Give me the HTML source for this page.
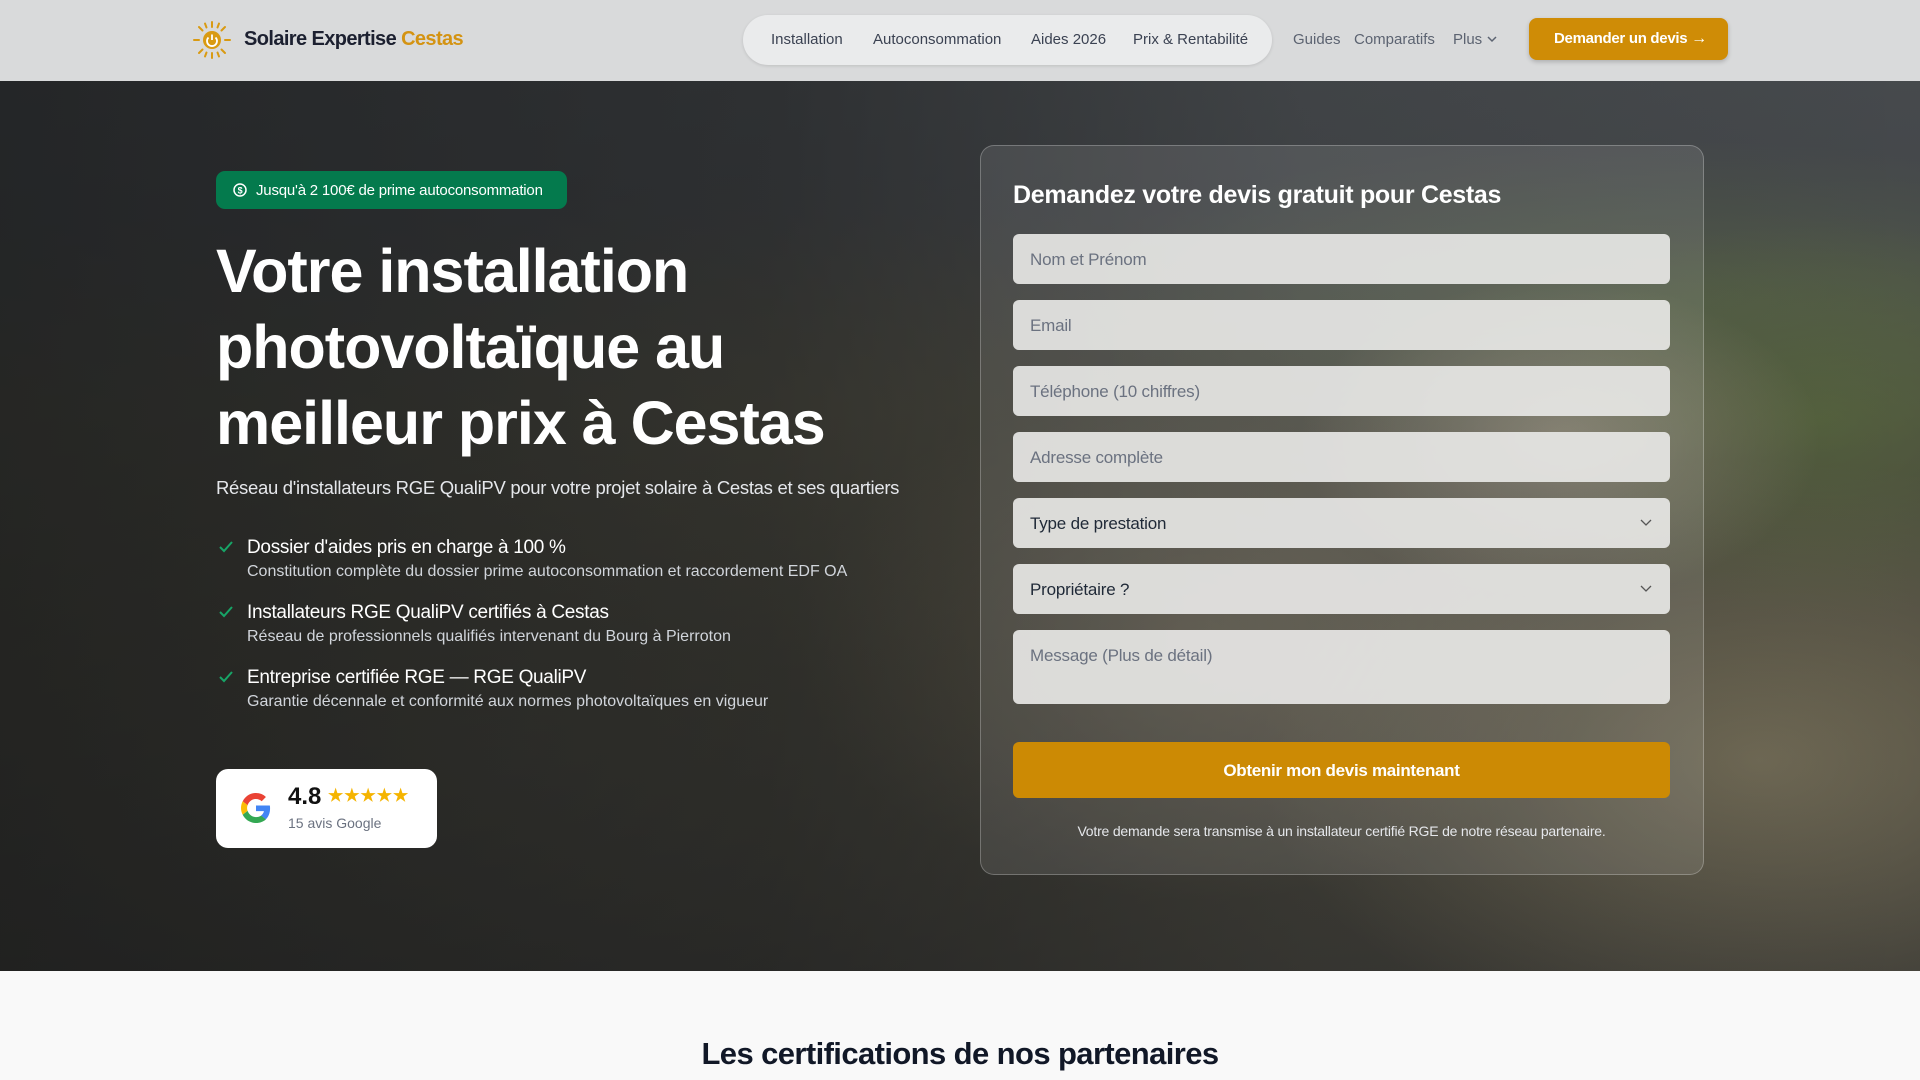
<!DOCTYPE html>
<html><head><meta charset="utf-8"><style>
*{box-sizing:border-box;margin:0;padding:0}
body{width:1920px;height:1080px;overflow:hidden;font-family:"Liberation Sans",sans-serif;background:#f9f9f9;position:relative}
.abs{position:absolute}
#hero{left:0;top:0;width:1920px;height:971px;overflow:hidden;
background:
radial-gradient(ellipse 260px 160px at 1560px 440px,rgba(170,160,140,.55),transparent),
radial-gradient(ellipse 300px 200px at 1820px 420px,rgba(90,110,60,.6),transparent),
radial-gradient(ellipse 500px 300px at 1760px 760px,rgba(150,140,110,.55),transparent),
radial-gradient(ellipse 400px 260px at 1200px 640px,rgba(120,110,90,.5),transparent),
radial-gradient(ellipse 600px 160px at 1650px 300px,rgba(95,110,75,.55),transparent),
radial-gradient(ellipse 500px 250px at 800px 420px,rgba(90,85,70,.4),transparent),
radial-gradient(ellipse 600px 300px at 500px 750px,rgba(80,80,70,.35),transparent),
linear-gradient(180deg,#474b4e 0%,#44474a 22%,#4a4a40 42%,#444238 70%,#3a3934 100%)}
#hero:before{content:"";position:absolute;inset:0;background:linear-gradient(90deg,rgba(22,23,24,.7) 0%,rgba(22,23,24,.5) 40%,rgba(22,23,24,.12) 68%,rgba(22,23,24,0) 100%)}
#hdr{left:0;top:0;width:1920px;height:81px;background:#d9dadb;z-index:5}
.nav{font-size:15px;color:#3b4252;top:31px}
.pill{left:743px;top:15px;width:529px;height:50px;border-radius:25px;background:#eaebec;box-shadow:0 1px 3px rgba(0,0,0,.12)}
.inp{left:1013px;width:657px;height:50px;border-radius:6px;background:rgba(230,230,228,.93);font-size:17px;color:#6b7280;padding:16px 17px 0;letter-spacing:-.2px}
.t{color:#fff}
</style></head><body>
<div id="hero" class="abs"></div>
<div id="hdr" class="abs">
<svg class="abs" style="left:193px;top:21px" width="38" height="38" viewBox="0 0 38 38"><g stroke="#d99a12" stroke-width="2" stroke-linecap="round"><line x1="19" y1="1" x2="19" y2="6"/><line x1="19" y1="32" x2="19" y2="37"/><line x1="1" y1="19" x2="6" y2="19"/><line x1="32" y1="19" x2="37" y2="19"/><line x1="6" y1="6" x2="9.5" y2="9.5"/><line x1="28.5" y1="28.5" x2="32" y2="32"/><line x1="6" y1="32" x2="9.5" y2="28.5"/><line x1="28.5" y1="9.5" x2="32" y2="6"/><line x1="12" y1="2.5" x2="13.5" y2="6.5"/><line x1="26" y1="2.5" x2="24.5" y2="6.5"/><line x1="12" y1="35.5" x2="13.5" y2="31.5"/><line x1="26" y1="35.5" x2="24.5" y2="31.5"/></g><circle cx="19" cy="19" r="9" fill="#d99a12"/><path d="M15.5 16.5a5 5 0 1 0 7 0" stroke="#fff" stroke-width="1.8" fill="none"/><line x1="19" y1="13.5" x2="19" y2="19" stroke="#fff" stroke-width="1.8"/></svg>
<div class="abs" style="left:244px;top:28px;font-size:20px;font-weight:bold;color:#1c2030;letter-spacing:-.6px">Solaire Expertise <span style="color:#d49312">Cestas</span></div>
<div class="abs pill"></div>
<div class="abs nav" style="left:771px">Installation</div>
<div class="abs nav" style="left:873px">Autoconsommation</div>
<div class="abs nav" style="left:1031px">Aides 2026</div>
<div class="abs nav" style="left:1133px">Prix &amp; Rentabilité</div>
<div class="abs nav" style="left:1293px;color:#5c6371">Guides</div>
<div class="abs nav" style="left:1354px;color:#5c6371">Comparatifs</div>
<div class="abs nav" style="left:1453px;color:#5c6371">Plus <svg width="12" height="10" viewBox="0 0 12 10"><path d="M2 3l4 4 4-4" stroke="#5c6371" stroke-width="1.5" fill="none"/></svg></div>
<div class="abs" style="left:1529px;top:18px;width:199px;height:42px;border-radius:8px;background:#cf8c06;color:#fff;font-size:15px;font-weight:bold;padding-top:12px;padding-left:25px;box-shadow:0 2px 5px rgba(0,0,0,.2);letter-spacing:-.3px">Demander un devis <span style="font-size:16px">→</span></div>
</div>

<div class="abs" style="left:216px;top:171px;width:351px;height:38px;border-radius:9px;background:#047a4d;color:#fff;font-size:15px;padding:11px 0 0 40px;letter-spacing:-.2px"><svg class="abs" style="left:17px;top:12px" width="14" height="14" viewBox="0 0 14 14"><circle cx="7" cy="7" r="6" stroke="#fff" stroke-width="1.5" fill="none"/><text x="7" y="10.5" font-size="9" fill="#fff" text-anchor="middle" font-family="Liberation Sans" font-weight="bold">$</text></svg>Jusqu'à 2 100€ de prime autoconsommation</div>
<div class="abs t" style="left:216px;top:233px;font-size:61px;font-weight:bold;line-height:76px;letter-spacing:-1px">Votre installation<br>photovoltaïque au<br>meilleur prix à Cestas</div>
<div class="abs" style="left:216px;top:477px;font-size:18.5px;color:#e5e7eb;letter-spacing:-.3px">Réseau d'installateurs RGE QualiPV pour votre projet solaire à Cestas et ses quartiers</div>

<svg class="abs" style="left:218px;top:540px" width="16" height="14"><path d="M2 7l4 4 8-9" stroke="#17a567" stroke-width="2" fill="none"/></svg>
<div class="abs t" style="left:247px;top:537px;font-size:19px;letter-spacing:-.3px">Dossier d'aides pris en charge à 100 %</div>
<div class="abs" style="left:247px;top:563px;font-size:16px;color:#d1d5db">Constitution complète du dossier prime autoconsommation et raccordement EDF OA</div>
<svg class="abs" style="left:218px;top:605px" width="16" height="14"><path d="M2 7l4 4 8-9" stroke="#17a567" stroke-width="2" fill="none"/></svg>
<div class="abs t" style="left:247px;top:602px;font-size:19px;letter-spacing:-.3px">Installateurs RGE QualiPV certifiés à Cestas</div>
<div class="abs" style="left:247px;top:628px;font-size:16px;color:#d1d5db">Réseau de professionnels qualifiés intervenant du Bourg à Pierroton</div>
<svg class="abs" style="left:218px;top:670px" width="16" height="14"><path d="M2 7l4 4 8-9" stroke="#17a567" stroke-width="2" fill="none"/></svg>
<div class="abs t" style="left:247px;top:667px;font-size:19px;letter-spacing:-.3px">Entreprise certifiée RGE — RGE QualiPV</div>
<div class="abs" style="left:247px;top:693px;font-size:16px;color:#d1d5db">Garantie décennale et conformité aux normes photovoltaïques en vigueur</div>

<div class="abs" style="left:216px;top:769px;width:221px;height:79px;border-radius:12px;background:#fff">
<svg class="abs" style="left:25px;top:24px" width="30" height="30" viewBox="0 0 48 48"><path fill="#EA4335" d="M24 9.5c3.5 0 6.6 1.2 9.1 3.6l6.8-6.8C35.8 2.4 30.3 0 24 0 14.6 0 6.6 5.4 2.7 13.3l7.9 6.2C12.5 13.7 17.8 9.5 24 9.5z"/><path fill="#4285F4" d="M46.5 24.5c0-1.6-.1-3.1-.4-4.5H24v9h12.7c-.6 3-2.3 5.5-4.8 7.2l7.7 6c4.5-4.2 6.9-10.3 6.9-17.7z"/><path fill="#FBBC05" d="M10.5 28.6c-.5-1.5-.8-3-.8-4.6s.3-3.1.8-4.6l-7.9-6.2C1 16.5 0 20.1 0 24s1 7.5 2.7 10.8l7.8-6.2z"/><path fill="#34A853" d="M24 48c6.5 0 11.9-2.1 15.9-5.8l-7.7-6c-2.2 1.5-5 2.3-8.2 2.3-6.2 0-11.5-4.2-13.4-9.9l-7.9 6.2C6.6 42.6 14.6 48 24 48z"/></svg>
<div class="abs" style="left:72px;top:14px;font-size:24px;font-weight:bold;color:#111">4.8 <span style="font-size:17px;color:#f5b400;letter-spacing:1px;vertical-align:3px">★★★★★</span></div>
<div class="abs" style="left:72px;top:46px;font-size:14px;color:#6b7280">15 avis Google</div>
</div>

<div class="abs" style="left:980px;top:145px;width:724px;height:730px;border-radius:14px;background:rgba(255,255,255,.1);border:1px solid rgba(255,255,255,.25)"></div>
<div class="abs t" style="left:1013px;top:181px;font-size:25px;font-weight:bold;letter-spacing:-.3px">Demandez votre devis gratuit pour Cestas</div>
<div class="abs inp" style="top:234px">Nom et Prénom</div>
<div class="abs inp" style="top:300px">Email</div>
<div class="abs inp" style="top:366px">Téléphone (10 chiffres)</div>
<div class="abs inp" style="top:432px">Adresse complète</div>
<div class="abs inp" style="top:498px;color:#1f2937">Type de prestation<svg class="abs" style="right:18px;top:21px" width="12" height="8"><path d="M1 1l5 5 5-5" stroke="#555" stroke-width="1.3" fill="none"/></svg></div>
<div class="abs inp" style="top:564px;color:#1f2937">Propriétaire ?<svg class="abs" style="right:18px;top:21px" width="12" height="8"><path d="M1 1l5 5 5-5" stroke="#555" stroke-width="1.3" fill="none"/></svg></div>
<div class="abs inp" style="top:630px;height:74px">Message (Plus de détail)</div>
<div class="abs" style="left:1013px;top:742px;width:657px;height:56px;border-radius:6px;background:#cc8a04;color:#fff;font-size:17px;font-weight:bold;text-align:center;padding-top:19px;letter-spacing:-.3px">Obtenir mon devis maintenant</div>
<div class="abs" style="left:1013px;top:823px;width:657px;text-align:center;font-size:14px;color:#e5e7eb;letter-spacing:-.2px">Votre demande sera transmise à un installateur certifié RGE de notre réseau partenaire.</div>

<div class="abs" style="left:0;top:1036px;width:1920px;text-align:center;font-size:31px;font-weight:bold;color:#111827;letter-spacing:-.6px">Les certifications de nos partenaires</div>
</body></html>
